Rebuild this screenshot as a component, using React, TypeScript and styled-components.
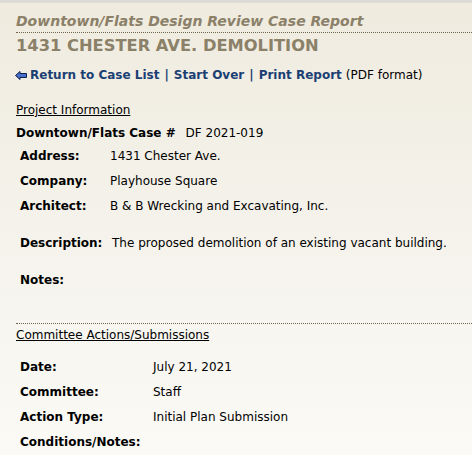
import React from 'react'
import styled, { createGlobalStyle } from 'styled-components'

const GlobalStyle = createGlobalStyle`
  html, body {
    margin: 0;
    padding: 0;
  }
  body {
    font-family: "DejaVu Sans", Verdana, sans-serif;
    font-size: 12px;
    color: #000;
  }
`

const Page = styled.div`
  width: 472px;
  height: 455px;
  overflow: hidden;
  box-sizing: border-box;
  border-top: 3px solid #dcdbd6;
  background: linear-gradient(to bottom, #efebdf 0%, #f5f3ec 55%, #fbfaf6 100%);
  padding: 9px 0 0 16px;
`

const Kicker = styled.h2`
  margin: 0;
  padding-bottom: 1px;
  font-size: 14px;
  font-style: italic;
  font-weight: bold;
  color: #8b8068;
  border-bottom: 1px dotted #6f6650;
  line-height: 19px;
`

const Title = styled.h1`
  margin: 1px 0 0;
  font-size: 16.3px;
  font-weight: bold;
  color: #8b8068;
  line-height: 24px;
`

const NavBar = styled.div`
  margin-top: 9px;
  margin-left: -1px;
  display: flex;
  align-items: center;
  font-size: 12px;
  line-height: 16px;
  white-space: nowrap;
`

const NavLink = styled.a`
  color: #1b3f73;
  font-weight: bold;
  text-decoration: none;
`

const Sep = styled.span`
  color: #1b3f73;
  font-weight: bold;
  margin: 0 5px;
`

const Note = styled.span`
  margin-left: 4px;
`

const Arrow = () => (
  <svg width="12" height="9" viewBox="0 0 12 9" style={{ marginRight: 3 }}>
    <path d="M0.5 4.5 L5 0.5 V2.5 H11.5 V6.5 H5 V8.5 Z" fill="#4a6fc9" stroke="#0d1f4a" strokeWidth="1" strokeLinejoin="round" />
  </svg>
)

const SectionHeading = styled.div<{ $top: number }>`
  margin-top: ${p => p.$top}px;
  text-decoration: underline;
  line-height: 16px;
`

const CaseLine = styled.div`
  margin-top: 7px;
  line-height: 16px;
  b {
    margin-right: 6px;
  }
`

const FieldGrid = styled.div<{ $labelWidth: number; $top: number }>`
  display: grid;
  grid-template-columns: ${p => p.$labelWidth}px 1fr;
  margin: ${p => p.$top}px 0 0 4px;
  row-gap: 9px;
  line-height: 16px;
  white-space: nowrap;
`

const Label = styled.div<{ $gap?: number }>`
  font-weight: bold;
  margin-top: ${p => p.$gap || 0}px;
`

const Value = styled.div<{ $gap?: number; $indent?: number }>`
  margin-top: ${p => p.$gap || 0}px;
  padding-left: ${p => p.$indent || 0}px;
`

const Divider = styled.div`
  margin-top: 35px;
  border-top: 1px dotted #6f6650;
`

type Field = { label: string; value: string; gap?: number; indent?: number }

const projectFields: Field[] = [
  { label: 'Address:', value: '1431 Chester Ave.' },
  { label: 'Company:', value: 'Playhouse Square' },
  { label: 'Architect:', value: 'B & B Wrecking and Excavating, Inc.' },
  { label: 'Description:', value: 'The proposed demolition of an existing vacant building.', gap: 12, indent: 2 },
  { label: 'Notes:', value: '', gap: 12 },
]

const actionFields: Field[] = [
  { label: 'Date:', value: 'July 21, 2021' },
  { label: 'Committee:', value: 'Staff' },
  { label: 'Action Type:', value: 'Initial Plan Submission' },
  { label: 'Conditions/Notes:', value: '' },
]

function Fields({ fields, labelWidth, top }: { fields: Field[]; labelWidth: number; top: number }) {
  return (
    <FieldGrid $labelWidth={labelWidth} $top={top}>
      {fields.map(f => (
        <React.Fragment key={f.label}>
          <Label $gap={f.gap}>{f.label}</Label>
          <Value $gap={f.gap} $indent={f.indent}>{f.value}</Value>
        </React.Fragment>
      ))}
    </FieldGrid>
  )
}

export default function App() {
  return (
    <>
      <GlobalStyle />
      <Page>
        <Kicker>Downtown/Flats Design Review Case Report</Kicker>
        <Title>1431 CHESTER AVE. DEMOLITION</Title>
        <NavBar>
          <Arrow />
          <NavLink href="#">Return to Case List</NavLink>
          <Sep>|</Sep>
          <NavLink href="#">Start Over</NavLink>
          <Sep>|</Sep>
          <NavLink href="#">Print Report</NavLink>
          <Note>(PDF format)</Note>
        </NavBar>

        <SectionHeading $top={19}>Project Information</SectionHeading>
        <CaseLine>
          <b>Downtown/Flats Case #</b> DF 2021-019
        </CaseLine>
        <Fields fields={projectFields} labelWidth={90} top={7} />

        <Divider />
        <SectionHeading $top={3}>Committee Actions/Submissions</SectionHeading>
        <Fields fields={actionFields} labelWidth={133} top={16} />
      </Page>
    </>
  )
}
